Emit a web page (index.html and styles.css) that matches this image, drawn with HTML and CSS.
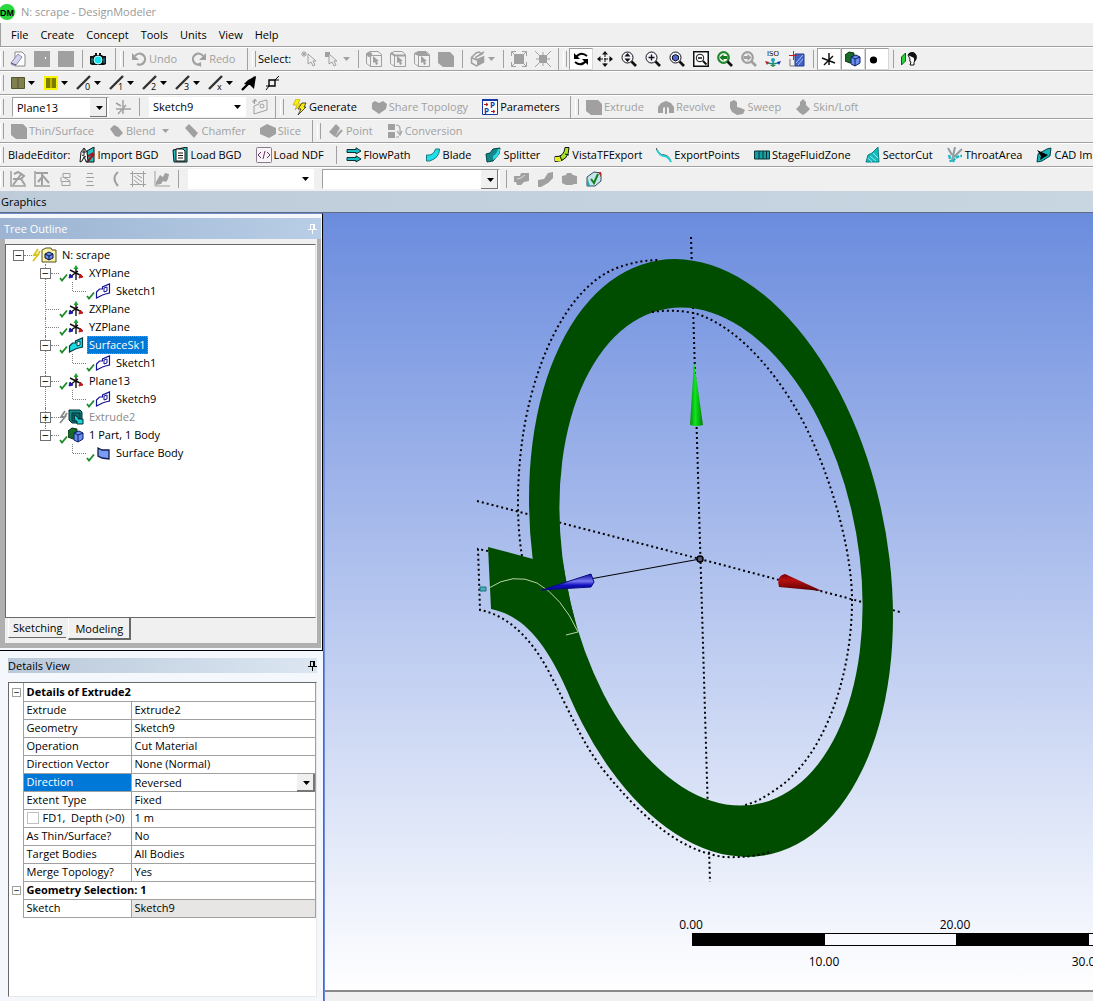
FILE: index.html
```html
<!DOCTYPE html>
<html lang="en">
<head>
<meta charset="utf-8">
<meta name="viewport" content="width=device-width, initial-scale=1">
<title>N: scrape - DesignModeler</title>
<link rel="stylesheet" href="styles.css">
</head>
<body>
<svg class="sprite" aria-hidden="true">
  <symbol id="caret" viewBox="0 0 7 4"><path d="M0 0h7L3.500 4z" fill="currentColor"/></symbol>
  <symbol id="pin" viewBox="0 0 9 10"><path d="M2.500 0v5M2 .5h5M5.500 0v5M6.500 0v5M0 5.500h9M4.500 6v4" fill="none" stroke="currentColor"/></symbol>
  <symbol id="new" viewBox="0 0 16 16"><path d="M5 1h7l3 3v11H5z" fill="#fff" stroke="#888"/><path d="M1 12l7-9 4 3-6 8H2z" fill="#d4d4f0" stroke="#8a8aa8"/><path d="M1 12l5 2" stroke="#55557a"/></symbol>
  <symbol id="save" viewBox="0 0 16 16"><path d="M0 0h16v16H0z" fill="#a0a0a0"/><path d="M11 6h1v2h-1z" fill="#fff"/></symbol>
  <symbol id="blank" viewBox="0 0 16 16"><path d="M0 0h16v16H0z" fill="#a0a0a0"/></symbol>
  <symbol id="camera" viewBox="0 0 16 16"><path d="M0 5h3l1-1h8l1 1h3v8l-2 1H2l-2-1z" fill="#111"/><path d="M5 3h2M9 3h2" stroke="#111" stroke-width="2"/><circle cx="8" cy="9" r="4" fill="#19e0ee" stroke="#bff"/><path d="M2 7v5M14 7v5" stroke="#18a8b0"/></symbol>
  <symbol id="undo" viewBox="0 0 16 16"><path d="M4 5a5.500 5.500 0 1 1 2 8" fill="none" stroke="#a0a0a0" stroke-width="2.200"/><path d="M1 2v7h7z" fill="#a0a0a0"/></symbol>
  <symbol id="redo" viewBox="0 0 16 16"><path d="M12 5a5.500 5.500 0 1 0-2 8" fill="none" stroke="#a0a0a0" stroke-width="2.200"/><path d="M15 2v7H8z" fill="#a0a0a0"/><path d="M6 13l4-2v5z" fill="#a0a0a0"/></symbol>
  <symbol id="pick" viewBox="0 0 16 16"><path d="M0 3h6M3 0v6M1 1l4 4M5 1L1 5" stroke="#a0a0a0"/><path d="M7 3v10l3-2 2 4 2-1-2-4h3z" fill="#eee" stroke="#a0a0a0"/></symbol>
  <symbol id="pickbox" viewBox="0 0 16 16"><path d="M0 1h5v5H0z" fill="#a0a0a0"/><path d="M4 3v10l3-2 2 4 2-1-2-4h3z" fill="#eee" stroke="#a0a0a0"/></symbol>
  <symbol id="cube" viewBox="0 0 16 16"><path d="M.5 2.500L4 .5h8l3.500 3v12h-11l-4-3zM.5 2.500l4 2h11M4.500 4.500v11" fill="none" stroke="#a0a0a0"/><path d="M7 5v7l2-1 1 3 2-1-1-3h2z" fill="#a0a0a0"/></symbol>
  <symbol id="cubev" viewBox="0 0 16 16"><use href="#cube"/><circle cx="3.500" cy="3.500" r="2.500" fill="#a0a0a0"/></symbol>
  <symbol id="cubee" viewBox="0 0 16 16"><use href="#cube"/><path d="M1 2l4 2.500h10" fill="none" stroke="#a0a0a0" stroke-width="2"/></symbol>
  <symbol id="cubef" viewBox="0 0 16 16"><use href="#cube"/><path d="M0 2l4-1h8l4 4H5z" fill="#a0a0a0"/></symbol>
  <symbol id="body" viewBox="0 0 16 16"><path d="M0 1h12l4 4v11H5l-5-4z" fill="#a0a0a0"/></symbol>
  <symbol id="isobox" viewBox="0 0 16 16"><path d="M1.500 6.500l5 2.500 7-3v5l-7 4-5-3z" fill="none" stroke="#a0a0a0" stroke-width="1.500"/><path d="M7 9l7-3v5l-7 4z" fill="#a0a0a0"/><path d="M2 6l4-4 3-1 3 2-6 3v2M9 4l5-3" fill="none" stroke="#a0a0a0" stroke-width="1.500"/></symbol>
  <symbol id="expand" viewBox="0 0 16 16"><path d="M3 3h10v10H3z" fill="#a0a0a0"/><path d="M.5 5V.5H5M11 .5h4.500V5M15.500 11v4.500H11M5 15.500H.5V11M1 1l3 3M15 1l-3 3M15 15l-3-3M1 15l3-3" fill="none" stroke="#a0a0a0"/></symbol>
  <symbol id="shrink" viewBox="0 0 16 16"><path d="M4 4h8v8H4z" fill="#a0a0a0"/><path d="M0 0l16 16M16 0L0 16M8 1v14M1 8h14" stroke="#a0a0a0"/></symbol>
  <symbol id="rotate" viewBox="0 0 16 16"><path d="M14 5Q8 0 3 6M2 11q6 5 11-1" fill="none" stroke="#000" stroke-width="2"/><path d="M1 2v6h6zM15 14V8H9z" fill="#000"/></symbol>
  <symbol id="pan" viewBox="0 0 16 16"><path d="M8 2v12M2 8h12" stroke="#111" stroke-dasharray="4 1"/><path d="M8 0l3 3.500H5zM8 16l3-3.500H5zM0 8l3.500-3v6zM16 8l-3.500-3v6z" fill="#111"/></symbol>
  <symbol id="lens" viewBox="0 0 16 16"><circle cx="6.500" cy="6.500" r="5.500" fill="#f4f4ff" stroke="#111"/><path d="M10.500 10.500L15 15" stroke="#111" stroke-width="2.600"/></symbol>
  <symbol id="zoom" viewBox="0 0 16 16"><use href="#lens"/><path d="M6.500 2l3 3.500h-6zM6.500 11l3-3.500h-6z" fill="#111"/></symbol>
  <symbol id="zoomin" viewBox="0 0 16 16"><use href="#lens"/><path d="M6.500 3.500v6M3.500 6.500h6" stroke="#111" stroke-width="1.400"/></symbol>
  <symbol id="zoomfit" viewBox="0 0 16 16"><use href="#lens"/><path d="M3.500 5l3-1.500L9.500 5v3.500l-3 1.500-3-1.500z" fill="#4c66d0" stroke="#112"/></symbol>
  <symbol id="zoomwin" viewBox="0 0 16 16"><path d="M.75.75h14.500v14.500H.75z" fill="#fff" stroke="#111" stroke-width="1.500"/><circle cx="7" cy="7" r="3.800" fill="none" stroke="#111"/><path d="M10 10l3.500 3.500" stroke="#111" stroke-width="2"/><path d="M5 7h4" stroke="#111" stroke-width="1.500"/></symbol>
  <symbol id="zoomprev" viewBox="0 0 16 16"><circle cx="6.500" cy="6.500" r="5.300" fill="#fff" stroke="#22882a" stroke-width="2.200"/><path d="M10.500 10.500L15 15" stroke="#111" stroke-width="2.600"/><path d="M2.500 6.500l4-3.500v2h4v3h-4v2z" fill="#127a1c"/></symbol>
  <symbol id="zoomnext" viewBox="0 0 16 16"><circle cx="6.500" cy="6.500" r="5.300" fill="none" stroke="#a0a0a0" stroke-width="2.200"/><path d="M10.500 10.500L15 15" stroke="#a0a0a0" stroke-width="2.600"/><path d="M10.500 6.500l-4-3.500v2h-4v3h4v2z" fill="#a0a0a0"/></symbol>
  <symbol id="iso" viewBox="0 0 16 16"><text x="8" y="5" text-anchor="middle" font-family="DejaVu Sans" font-size="7" fill="#111">ISO</text><path d="M8 9v5M3 12l5 1 5-1" stroke="#178a7a" fill="none" stroke-width="1.500"/><circle cx="8" cy="9" r="2" fill="#19a5c0"/><path d="M0 10l4 1-2 3z" fill="#c01818"/><path d="M16 10l-4 1 2 3z" fill="#1a2fb8"/><path d="M5 14h6l-3 2z" fill="#188a38"/></symbol>
  <symbol id="lookat" viewBox="0 0 16 16"><path d="M6 3h9v12H6z" fill="#3e62c8" stroke="#223a8a"/><path d="M7 12l7-8M9 14l5-6" stroke="#a9c0f4"/><path d="M0 4.500h8M4.500 0v9" stroke="#c02020"/><path d="M1 8v7h5" fill="none" stroke="#777"/></symbol>
  <symbol id="triad" viewBox="0 0 16 16"><path d="M8 2v12M1 7l13 5M3 14l9-9" stroke="#111" stroke-width="1.500"/></symbol>
  <symbol id="twocubes" viewBox="0 0 16 16"><path d="M0 4l4-3 5 1v8l-4 2-5-2z" fill="#176a2a" stroke="#0a3312"/><path d="M6 6l5-2 4 2v6l-5 3-4-2z" fill="#6b8df0" stroke="#0a1e66"/><path d="M6 6l4 2 5-2M10 8v7" fill="none" stroke="#0a1e66"/></symbol>
  <symbol id="dot" viewBox="0 0 16 16"><circle cx="4.500" cy="9" r="3.600" fill="#000"/></symbol>
  <symbol id="face" viewBox="0 0 16 16"><path d="M.5 6l4-4v8l-4 4z" fill="#27d43a" stroke="#0b5a16"/><path d="M7 4q1-3 5-2 4 1 3 6l-2 3v3H9l1-3q-2 0-1-3z" fill="#fff" stroke="#111"/><path d="M7 4q1-3 5-3 5 2 3 8l-2 2V7L9 5z" fill="#111"/></symbol>
  <symbol id="fc1" viewBox="0 0 16 16"><path d="M1.500 2.500h13v11h-13zM8 2v12" fill="#7f7f4f" stroke="#55552c"/></symbol>
  <symbol id="fc2" viewBox="0 0 16 16"><path d="M1 1h14v14H1z" fill="#f8f400"/><path d="M3 3h10v10H3z" fill="#7b7b00"/><path d="M8 3v10" stroke="#f8f400"/></symbol>
  <symbol id="edge" viewBox="0 0 16 16"><path d="M1 14L14 1" stroke="#333" stroke-width="2.400"/></symbol>
  <symbol id="edge0" viewBox="0 0 16 16"><use href="#edge"/><text x="9" y="15" class="digit">0</text></symbol>
  <symbol id="edge1" viewBox="0 0 16 16"><use href="#edge"/><text x="9" y="15" class="digit">1</text></symbol>
  <symbol id="edge2" viewBox="0 0 16 16"><use href="#edge"/><text x="9" y="15" class="digit">2</text></symbol>
  <symbol id="edge3" viewBox="0 0 16 16"><use href="#edge"/><text x="9" y="15" class="digit">3</text></symbol>
  <symbol id="edgex" viewBox="0 0 16 16"><use href="#edge"/><text x="9" y="15" class="digit">x</text></symbol>
  <symbol id="arrow" viewBox="0 0 16 16"><path d="M1 15L14 2" stroke="#000" stroke-width="2.400"/><path d="M15 1l-2 13-4-4-6-1 4-4z" fill="#000"/></symbol>
  <symbol id="vertex" viewBox="0 0 16 16"><path d="M4 5h6v6H4z" fill="none" stroke="#000" stroke-width="1.400"/><path d="M10 5l4-4M4 11l-3 4M10 5h4M1 11h3" stroke="#000"/></symbol>
  <symbol id="newplane" viewBox="0 0 16 16"><path d="M8 1v14M1 10h15M3 15l8-9M1 4l5 3" stroke="#a0a0a0" stroke-width="1.500"/></symbol>
  <symbol id="newsketch" viewBox="0 0 16 16"><path d="M2 7l5-2V3l8-2v10L2 15z" fill="none" stroke="#a0a0a0"/><circle cx="10" cy="7" r="2" fill="none" stroke="#a0a0a0"/><path d="M0 2h5M2.500 0v5M1 4l3-4" stroke="#a0a0a0"/></symbol>
  <symbol id="bolt" viewBox="0 0 16 16"><path d="M5 0h4L7 5h3l-6 6 2-5H2z" fill="#fdee10" stroke="#b8a800" stroke-width=".7"/><path d="M11 4h4l-2 4h2l-8 8 3-6H7z" fill="#fdee10" stroke="#222" stroke-width=".8"/></symbol>
  <symbol id="share" viewBox="0 0 16 16"><path d="M1 4l3-2 4 2 4-2 4 3-1 5-7 5-7-5z" fill="#a0a0a0"/></symbol>
  <symbol id="param" viewBox="0 0 16 16"><path d="M.5 1h15v14.500H.5z" fill="#fff" stroke="#1738a8"/><path d="M0 0h16v2H0z" fill="#1738a8"/><text x="8" y="9" class="pp">P</text><text x="2" y="15" class="pp">P</text><path d="M2 5.500h4M4 4l2 1.500L4 7M9 12.500h4M11 11l2 1.500-2 1.500" stroke="#b01818" fill="none"/></symbol>
  <symbol id="revolve" viewBox="0 0 16 16"><path d="M0 14V8l3-4 5-2 5 2 3 4v6h-5V9l-2-1v7H7V8L5 9v5z" fill="#a0a0a0"/></symbol>
  <symbol id="sweep" viewBox="0 0 16 16"><path d="M1 3l4-2 3 2v5l4 1 4 2-2 4-6 1-5-3-2-4z" fill="#a0a0a0"/></symbol>
  <symbol id="loft" viewBox="0 0 16 16"><path d="M8 0l3 3v3l4 4-4 4-3 2-3-2-4-4 4-4V3z" fill="#a0a0a0"/></symbol>
  <symbol id="blend" viewBox="0 0 16 16"><path d="M2 6l4-4 4 2 5 6-4 4-4-1z" fill="#a0a0a0"/></symbol>
  <symbol id="chamfer" viewBox="0 0 16 16"><path d="M2 5l4-4 9 9-4 5z" fill="#a0a0a0"/></symbol>
  <symbol id="slice" viewBox="0 0 16 16"><path d="M0 5l7-4 9 4v6l-7 4-9-4z" fill="#a0a0a0"/></symbol>
  <symbol id="point" viewBox="0 0 16 16"><path d="M1 9l7-8 4 4-5 9z" fill="#a0a0a0"/><path d="M8 14l6-7" stroke="#a0a0a0" stroke-width="2"/></symbol>
  <symbol id="convert" viewBox="0 0 16 16"><path d="M1 1h7v6H1zM1 9h7v6H1z" fill="#a0a0a0"/><path d="M9 2q4 0 4 4v4M10 8l3 4 2-4M9 14h3" stroke="#a0a0a0" fill="none" stroke-width="1.200"/></symbol>
  <symbol id="ibgd" viewBox="0 0 16 16"><path d="M8 4l7-4v15H7z" fill="#21c4c8" stroke="#111"/><path d="M8 10l6-4M9 14l6-7" stroke="#a01515" stroke-width="2"/><path d="M1 15l1-10 3-4 3 4 1 10-2-1-2-4-2 4z" fill="#fff" stroke="#111"/><path d="M3 5h4M3 8l4 2M5 2v6" stroke="#111"/></symbol>
  <symbol id="lbgd" viewBox="0 0 16 16"><path d="M1 3l14-3v15H2z" fill="#21c4c8" stroke="#111"/><path d="M4 2h7l2 2v10H4z" fill="#fff" stroke="#111"/><path d="M6 6h5M6 8.500h5M6 11h5" stroke="#111"/></symbol>
  <symbol id="lndf" viewBox="0 0 16 16"><rect x=".5" y=".5" width="15" height="15" rx="1" fill="#f8f4fa" stroke="#857c8c"/><path d="M5 5L2 8l3 3M11 5l3 3-3 3M9 4l-2 8" stroke="#6b2f6e" fill="none"/></symbol>
  <symbol id="flow" viewBox="0 0 16 16"><path d="M1 2.500h9V.8L15 4l-5 3V5.500H1zM1 10.500h9V8.800L15 12l-5 3v-1.500H1z" fill="#16c0c4" stroke="#0b2e30"/></symbol>
  <symbol id="blade" viewBox="0 0 16 16"><path d="M1.500 8q7 1 9-6l4 0q0 9-10 12h-3z" fill="#1fe0e8" stroke="#147a80"/></symbol>
  <symbol id="split" viewBox="0 0 16 16"><path d="M1 7l4-1 3-4 7-1-1 6-6 7-6 1z" fill="#12888c" stroke="#064447"/><path d="M8 9q4-2 5-7l2 0q0 7-7 11z" fill="#29d9e0"/></symbol>
  <symbol id="vista" viewBox="0 0 16 16"><path d="M1 9.500q9 1 10-9h4q0 14-14 14z" fill="#a5e62a" stroke="#111"/><path d="M1 10h6v4H1z" fill="#e8ee18"/><path d="M6 9l2 5M11 7l4 1" stroke="#111"/></symbol>
  <symbol id="export" viewBox="0 0 16 16"><path d="M0 1q3 7 8 7t7 7" fill="none" stroke="#333" stroke-width="1"/><path d="M1 3q3 6 7 6t7 6" fill="none" stroke="#1fd0d4" stroke-width="1.800"/></symbol>
  <symbol id="stage" viewBox="0 0 16 16"><path d="M.5 4h15v8H.5zM5 4v8M9 4v8M12.500 4v8" fill="#169fa3" stroke="#063438"/></symbol>
  <symbol id="sector" viewBox="0 0 16 16"><path d="M1 15l2-7 4-2 6-6 1 15z" fill="#18b8bc" stroke="#0f8085"/><path d="M5 9l6 5M8 6l5 5M3 11l4 4" stroke="#8af0f0"/></symbol>
  <symbol id="throat" viewBox="0 0 16 16"><path d="M1 1l4 7M8 0L5 14M15 2L7 10" stroke="#8f9ea0" stroke-width="2"/><path d="M6 15q2-6 9-6M2 8l2 7" stroke="#1fb8c4" stroke-width="2.500" fill="none" stroke-dasharray="4 1"/></symbol>
  <symbol id="cad" viewBox="0 0 16 16"><path d="M2 7l9-5 4-1-1 8-8 5-5 1z" fill="#17b5b9" stroke="#0b4144"/><path d="M1 3l11 5-8 5 1-4z" fill="#000"/></symbol>
  <symbol id="sk1" viewBox="0 0 16 16"><path d="M1 0v15h15" fill="none" stroke="#a0a0a0" stroke-width="1.500"/><path d="M3 14l9-12M4 3l4-2 6 4-3 3 4 6M3 8h8" fill="none" stroke="#a0a0a0" stroke-width="2"/></symbol>
  <symbol id="sk2" viewBox="0 0 16 16"><path d="M1 0v15h15" fill="none" stroke="#a0a0a0" stroke-width="1.500"/><path d="M2 2h12M8 1v13M4 11l5-6 6 7" fill="none" stroke="#a0a0a0" stroke-width="2"/></symbol>
  <symbol id="sk3" viewBox="0 0 16 16"><path d="M5 2.500h7v4H5zM4 10.500h8v4H4zM5 6l7 4M3 6v5" fill="none" stroke="#a0a0a0"/></symbol>
  <symbol id="sk4" viewBox="0 0 16 16"><path d="M5 2.500h6M4 6.500h8M5 10.500h6M4 14.500h8" stroke="#a0a0a0"/></symbol>
  <symbol id="sk5" viewBox="0 0 16 16"><path d="M12 1q-7 6 0 14" fill="none" stroke="#a0a0a0" stroke-width="2"/></symbol>
  <symbol id="sk6" viewBox="0 0 16 16"><path d="M2.500 2.500h11v11h-11zM0 2.500h16M0 13.500h16M2.500 0v16M13.500 0v16M4 5l8 6M7 4l5 3M4 9l5 4" fill="none" stroke="#a0a0a0"/></symbol>
  <symbol id="sk7" viewBox="0 0 16 16"><path d="M1 0v15h15" fill="none" stroke="#a0a0a0"/><path d="M2 11l4-7 3 2 2-4 4 1-1 5-2 3-3-1-2 3-5 1z" fill="#a0a0a0"/></symbol>
  <symbol id="c1" viewBox="0 0 16 16"><path d="M0 5l6 0 1-3h8v8l-5 1-3 3H3l-1-3H0z" fill="#a0a0a0"/><path d="M3 8l4-1 4-3" stroke="#ddd" fill="none"/></symbol>
  <symbol id="c2" viewBox="0 0 16 16"><path d="M0 9l6-1 4-6 5-1v6l-5 5-7 4H0z" fill="#a0a0a0"/></symbol>
  <symbol id="c3" viewBox="0 0 16 16"><path d="M0 5l4-1 1-2h4l2 2 4 1v8h-3l-2 1H4l-4-2z" fill="#a0a0a0"/></symbol>
  <symbol id="c4" viewBox="0 0 16 16"><path d="M1 6l7-5 7 1v8l-6 5-8 0z" fill="#c6e4ec" stroke="#33505e"/><path d="M1 6v9l3 0z" fill="#1ba5ac"/><path d="M12 1h3v5z" fill="#b03030"/><path d="M5 8l3 4 4-9" stroke="#128020" stroke-width="2" fill="none"/></symbol>
  <symbol id="check" viewBox="0 0 9 9"><path d="M1 5l2 2.500L8 1.500" fill="none" stroke="#1c8a28" stroke-width="1.800"/></symbol>
  <symbol id="zap" viewBox="0 0 9 14"><path d="M6 1L2 7h4L1 13M8 3L5 8" fill="none" stroke="currentColor" stroke-width="1.800"/></symbol>
  <symbol id="t-proj" viewBox="0 0 16 16"><path d="M1 3l4-2h5l1 2h4v12H1z" fill="#fbf4a8" stroke="#55501c"/><path d="M4 7l4-2 4 2v4l-4 2-4-2z" fill="#6b8df0" stroke="#0a1440"/><path d="M4 7l4 2 4-2M8 9v4" fill="none" stroke="#0a1440"/></symbol>
  <symbol id="t-plane" viewBox="0 0 16 16"><path d="M8 3v12M2 5l12 6M2 12l8-6" stroke="#111" stroke-width="1.400"/><path d="M8 0l2.500 4h-5z" fill="#18a828"/><path d="M15 12l-4 1 1-4z" fill="#c01818" stroke="#c01818"/><path d="M1 13l1-4 3 3z" fill="#1a1ab0" stroke="#1a1ab0"/></symbol>
  <symbol id="t-sketch" viewBox="0 0 16 16"><path d="M1.500 9l3-3h3V4l7-3v9l-4 1-3 1-6 3z" fill="#fff" stroke="#14149a" stroke-width="1.200"/><path d="M9 5l3-1v4l-3 1z" fill="none" stroke="#14149a"/></symbol>
  <symbol id="t-surf" viewBox="0 0 16 16"><path d="M1.500 9l3-3h3V4l7-3v9l-4 1-3 1-6 3z" fill="#19dce4" stroke="#063c40" stroke-width="1.200"/><path d="M9 5l3-1v4l-3 1z" fill="#fff" stroke="#063c40"/></symbol>
  <symbol id="t-extr" viewBox="0 0 16 16"><path d="M1 1h11l2 2v11H4l-3-3z" fill="#138a8c" stroke="#032c2e"/><path d="M4 4h8v8H4z" fill="#0a6a6c" stroke="#032c2e"/><path d="M6 6l4 2v2h5v5H9v-3H7z" fill="#19d4d8" stroke="#032c2e"/></symbol>
  <symbol id="t-body" viewBox="0 0 16 16"><path d="M3 3l4 2 7-0v9l-7-1-4-2z" fill="#7c9cf4" stroke="#101a50" stroke-width="1.300"/></symbol>
</svg>

<header class="titlebar">
  <svg class="logo" viewBox="0 0 16 16" aria-hidden="true"><circle cx="7" cy="8" r="8" fill="#28d83c"/><text x="7" y="12" text-anchor="middle" class="dm">DM</text></svg>
  <span>N: scrape - DesignModeler</span>
</header>

<nav class="menubar" aria-label="Main menu">
  <button>File</button><button>Create</button><button>Concept</button><button>Tools</button><button>Units</button><button>View</button><button>Help</button>
</nav>

<div class="toolbar" role="toolbar" aria-label="Standard">
  <div class="band band-file">
    <button class="ic" aria-label="New"><svg><use href="#new"/></svg></button>
    <button class="ic" aria-label="Save" disabled><svg><use href="#save"/></svg></button>
    <button class="ic" aria-label="Export" disabled><svg><use href="#blank"/></svg></button>
    <i class="sep"></i>
    <button class="ic" aria-label="Image capture"><svg><use href="#camera"/></svg></button>
  </div>
  <div class="band band-history">
    <button class="tool" disabled><svg><use href="#undo"/></svg>Undo</button>
    <button class="tool" disabled><svg><use href="#redo"/></svg>Redo</button>
  </div>
  <div class="band band-select">
    <span class="caption">Select:</span>
    <button class="ic" aria-label="New selection" disabled><svg><use href="#pick"/></svg></button>
    <button class="drop" aria-label="Select mode" disabled><svg><use href="#pickbox"/></svg><svg class="caret"><use href="#caret"/></svg></button>
    <i class="sep"></i>
    <button class="ic" aria-label="Points" disabled><svg><use href="#cubev"/></svg></button>
    <button class="ic" aria-label="Edges" disabled><svg><use href="#cubee"/></svg></button>
    <button class="ic" aria-label="Faces" disabled><svg><use href="#cubef"/></svg></button>
    <button class="ic" aria-label="Bodies" disabled><svg><use href="#body"/></svg></button>
    <i class="sep"></i>
    <button class="drop" aria-label="Extend" disabled><svg><use href="#isobox"/></svg><svg class="caret"><use href="#caret"/></svg></button>
    <i class="sep"></i>
    <button class="ic" aria-label="Grow" disabled><svg><use href="#expand"/></svg></button>
    <button class="ic" aria-label="Shrink" disabled><svg><use href="#shrink"/></svg></button>
  </div>
  <div class="band band-last">
    <button class="ic on" aria-label="Rotate"><svg><use href="#rotate"/></svg></button>
    <button class="ic" aria-label="Pan"><svg><use href="#pan"/></svg></button>
    <button class="ic" aria-label="Zoom"><svg><use href="#zoom"/></svg></button>
    <button class="ic" aria-label="Box zoom"><svg><use href="#zoomin"/></svg></button>
    <button class="ic" aria-label="Zoom to fit"><svg><use href="#zoomfit"/></svg></button>
    <button class="ic" aria-label="Magnifier"><svg><use href="#zoomwin"/></svg></button>
    <button class="ic" aria-label="Previous view"><svg><use href="#zoomprev"/></svg></button>
    <button class="ic" aria-label="Next view" disabled><svg><use href="#zoomnext"/></svg></button>
    <button class="ic" aria-label="Isometric view"><svg><use href="#iso"/></svg></button>
    <button class="ic" aria-label="Look at plane"><svg><use href="#lookat"/></svg></button>
    <i class="sep"></i>
    <button class="ic on" aria-label="Display plane"><svg><use href="#triad"/></svg></button>
    <button class="ic on" aria-label="Display model"><svg><use href="#twocubes"/></svg></button>
    <button class="ic on" aria-label="Display points"><svg><use href="#dot"/></svg></button>
    <i class="sep"></i>
    <button class="ic" aria-label="Look at face"><svg><use href="#face"/></svg></button>
  </div>
</div>

<div class="toolbar" role="toolbar" aria-label="Display">
  <div class="band band-last">
    <button class="drop" aria-label="Face color"><svg><use href="#fc1"/></svg><svg class="caret"><use href="#caret"/></svg></button>
    <button class="drop" aria-label="Highlight color"><svg><use href="#fc2"/></svg><svg class="caret"><use href="#caret"/></svg></button>
    <button class="drop" aria-label="Edges, free"><svg><use href="#edge0"/></svg><svg class="caret"><use href="#caret"/></svg></button>
    <button class="drop" aria-label="Edges, single"><svg><use href="#edge1"/></svg><svg class="caret"><use href="#caret"/></svg></button>
    <button class="drop" aria-label="Edges, double"><svg><use href="#edge2"/></svg><svg class="caret"><use href="#caret"/></svg></button>
    <button class="drop" aria-label="Edges, triple"><svg><use href="#edge3"/></svg><svg class="caret"><use href="#caret"/></svg></button>
    <button class="drop" aria-label="Edges, multiple"><svg><use href="#edgex"/></svg><svg class="caret"><use href="#caret"/></svg></button>
    <button class="ic" aria-label="Edge direction"><svg><use href="#arrow"/></svg></button>
    <button class="ic" aria-label="Display vertices"><svg><use href="#vertex"/></svg></button>
  </div>
</div>

<div class="toolbar" role="toolbar" aria-label="Modeling">
  <div class="band band-plane">
    <span class="combo framed combo-s"><select aria-label="Active plane"><option>Plane13</option></select><svg class="caret"><use href="#caret"/></svg></span>
    <button class="ic" aria-label="New plane" disabled><svg><use href="#newplane"/></svg></button>
    <i class="sep"></i>
    <span class="combo combo-s"><select aria-label="Active sketch"><option>Sketch9</option></select><svg class="caret"><use href="#caret"/></svg></span>
    <button class="ic" aria-label="New sketch" disabled><svg><use href="#newsketch"/></svg></button>
  </div>
  <div class="band band-generate">
    <button class="tool"><svg><use href="#bolt"/></svg>Generate</button>
    <button class="tool" disabled><svg><use href="#share"/></svg>Share Topology</button>
    <button class="tool"><svg><use href="#param"/></svg>Parameters</button>
  </div>
  <div class="band band-last">
    <button class="tool" disabled><svg><use href="#body"/></svg>Extrude</button>
    <button class="tool" disabled><svg><use href="#revolve"/></svg>Revolve</button>
    <button class="tool" disabled><svg><use href="#sweep"/></svg>Sweep</button>
    <button class="tool" disabled><svg><use href="#loft"/></svg>Skin/Loft</button>
  </div>
</div>

<div class="toolbar" role="toolbar" aria-label="Features">
  <div class="band band-feature">
    <button class="tool" disabled><svg><use href="#body"/></svg>Thin/Surface</button>
    <button class="tool" disabled><svg><use href="#blend"/></svg>Blend<svg class="caret"><use href="#caret"/></svg></button>
    <button class="tool" disabled><svg><use href="#chamfer"/></svg>Chamfer</button>
    <button class="tool" disabled><svg><use href="#slice"/></svg>Slice</button>
  </div>
  <div class="band band-last">
    <button class="tool" disabled><svg><use href="#point"/></svg>Point</button>
    <button class="tool" disabled><svg><use href="#convert"/></svg>Conversion</button>
  </div>
</div>

<div class="toolbar" role="toolbar" aria-label="BladeEditor">
  <div class="band band-last">
    <span class="caption caption-first">BladeEditor:</span>
    <button class="tool"><svg><use href="#ibgd"/></svg>Import BGD</button>
    <button class="tool"><svg><use href="#lbgd"/></svg>Load BGD</button>
    <button class="tool"><svg><use href="#lndf"/></svg>Load NDF</button>
    <i class="sep"></i>
    <button class="tool"><svg><use href="#flow"/></svg>FlowPath</button>
    <button class="tool"><svg><use href="#blade"/></svg>Blade</button>
    <button class="tool"><svg><use href="#split"/></svg>Splitter</button>
    <button class="tool"><svg><use href="#vista"/></svg>VistaTFExport</button>
    <button class="tool"><svg><use href="#export"/></svg>ExportPoints</button>
    <button class="tool"><svg><use href="#stage"/></svg>StageFluidZone</button>
    <button class="tool"><svg><use href="#sector"/></svg>SectorCut</button>
    <button class="tool"><svg><use href="#throat"/></svg>ThroatArea</button>
    <button class="tool"><svg><use href="#cad"/></svg>CAD Import</button>
  </div>
</div>

<div class="toolbar toolbar-end" role="toolbar" aria-label="Sketch tools">
  <div class="band band-last">
    <button class="ic" aria-label="Sketch instance" disabled><svg><use href="#sk1"/></svg></button>
    <button class="ic" aria-label="Projection" disabled><svg><use href="#sk2"/></svg></button>
    <button class="ic" aria-label="Link" disabled><svg><use href="#sk3"/></svg></button>
    <button class="ic" aria-label="Layers" disabled><svg><use href="#sk4"/></svg></button>
    <button class="ic" aria-label="Curve" disabled><svg><use href="#sk5"/></svg></button>
    <button class="ic" aria-label="Section" disabled><svg><use href="#sk6"/></svg></button>
    <button class="ic" aria-label="Transform" disabled><svg><use href="#sk7"/></svg></button>
    <i class="sep"></i>
    <span class="combo combo-m"><select aria-label="Flow path"><option></option></select><svg class="caret"><use href="#caret"/></svg></span>
    <span class="combo framed combo-l"><select aria-label="Blade row"><option></option></select><svg class="caret"><use href="#caret"/></svg></span>
    <i class="sep"></i>
    <button class="ic" aria-label="Blade row view" disabled><svg><use href="#c1"/></svg></button>
    <button class="ic" aria-label="Blade view" disabled><svg><use href="#c2"/></svg></button>
    <button class="ic" aria-label="Hub view" disabled><svg><use href="#c3"/></svg></button>
    <button class="ic" aria-label="Preferences"><svg><use href="#c4"/></svg></button>
  </div>
</div>

<h1 class="graphics-title">Graphics</h1>

<main class="workspace">
  <aside class="side">
    <section class="outline">
      <header class="outline-head"><h2>Tree Outline</h2><button class="pin" aria-label="Pin tree outline"><svg><use href="#pin"/></svg></button></header>
      <div class="outline-body">
        <ul class="tree">
          <li>
            <div class="node"><button class="toggle" aria-label="Collapse">−</button><i class="dots"></i><svg class="state zap-yellow"><use href="#zap"/></svg><svg class="icon"><use href="#t-proj"/></svg><span>N: scrape</span></div>
            <ul>
              <li><div class="node"><button class="toggle" aria-label="Collapse">−</button><i class="dots"></i><svg class="state"><use href="#check"/></svg><svg class="icon"><use href="#t-plane"/></svg><span>XYPlane</span></div>
                <ul><li><div class="node"><i class="dots long"></i><svg class="state"><use href="#check"/></svg><svg class="icon"><use href="#t-sketch"/></svg><span>Sketch1</span></div></li></ul></li>
              <li><div class="node"><i class="dots long"></i><svg class="state"><use href="#check"/></svg><svg class="icon"><use href="#t-plane"/></svg><span>ZXPlane</span></div></li>
              <li><div class="node"><i class="dots long"></i><svg class="state"><use href="#check"/></svg><svg class="icon"><use href="#t-plane"/></svg><span>YZPlane</span></div></li>
              <li><div class="node"><button class="toggle" aria-label="Collapse">−</button><i class="dots"></i><svg class="state"><use href="#check"/></svg><svg class="icon"><use href="#t-surf"/></svg><span class="selected">SurfaceSk1</span></div>
                <ul><li><div class="node"><i class="dots long"></i><svg class="state"><use href="#check"/></svg><svg class="icon"><use href="#t-sketch"/></svg><span>Sketch1</span></div></li></ul></li>
              <li><div class="node"><button class="toggle" aria-label="Collapse">−</button><i class="dots"></i><svg class="state"><use href="#check"/></svg><svg class="icon"><use href="#t-plane"/></svg><span>Plane13</span></div>
                <ul><li><div class="node"><i class="dots long"></i><svg class="state"><use href="#check"/></svg><svg class="icon"><use href="#t-sketch"/></svg><span>Sketch9</span></div></li></ul></li>
              <li><div class="node"><button class="toggle" aria-label="Expand">+</button><i class="dots"></i><svg class="state zap-gray"><use href="#zap"/></svg><svg class="icon"><use href="#t-extr"/></svg><span class="muted">Extrude2</span></div></li>
              <li><div class="node"><button class="toggle" aria-label="Collapse">−</button><i class="dots"></i><svg class="state"><use href="#check"/></svg><svg class="icon"><use href="#twocubes"/></svg><span>1 Part, 1 Body</span></div>
                <ul><li><div class="node"><i class="dots long"></i><svg class="state"><use href="#check"/></svg><svg class="icon"><use href="#t-body"/></svg><span>Surface Body</span></div></li></ul></li>
            </ul>
          </li>
        </ul>
        <div class="tabs"><button class="tab">Sketching</button><button class="tab active">Modeling</button></div>
      </div>
    </section>

    <section class="details">
      <header class="details-head"><h2>Details View</h2><button class="pin" aria-label="Pin details view"><svg><use href="#pin"/></svg></button></header>
      <div class="details-body">
        <table>
          <colgroup><col class="c-gutter"><col class="c-name"><col></colgroup>
          <tr><td class="gutter"><button class="toggle small" aria-label="Collapse">−</button></td><th colspan="2">Details of Extrude2</th></tr>
          <tr><td class="gutter"></td><td>Extrude</td><td>Extrude2</td></tr>
          <tr><td class="gutter"></td><td>Geometry</td><td>Sketch9</td></tr>
          <tr><td class="gutter"></td><td>Operation</td><td>Cut Material</td></tr>
          <tr><td class="gutter"></td><td>Direction Vector</td><td>None (Normal)</td></tr>
          <tr><td class="gutter"></td><td class="current"><label for="direction">Direction</label></td><td class="editor"><span class="combo in-cell"><select id="direction"><option>Reversed</option></select><svg class="caret"><use href="#caret"/></svg></span></td></tr>
          <tr><td class="gutter"></td><td>Extent Type</td><td>Fixed</td></tr>
          <tr><td class="gutter"></td><td><label class="check"><input type="checkbox">FD1,&nbsp; Depth (&gt;0)</label></td><td>1 m</td></tr>
          <tr><td class="gutter"></td><td>As Thin/Surface?</td><td>No</td></tr>
          <tr><td class="gutter"></td><td>Target Bodies</td><td>All Bodies</td></tr>
          <tr><td class="gutter"></td><td>Merge Topology?</td><td>Yes</td></tr>
          <tr><td class="gutter"><button class="toggle small" aria-label="Collapse">−</button></td><th colspan="2">Geometry Selection: 1</th></tr>
          <tr><td class="gutter"></td><td>Sketch</td><td class="readonly">Sketch9</td></tr>
        </table>
      </div>
    </section>
  </aside>

  <section class="view">
    <svg class="scene" viewBox="325 213 768 777" preserveAspectRatio="xMidYMid meet" role="img" aria-label="Model view">
      <defs>
        <linearGradient id="g-green"><stop offset="0" stop-color="#0a8a14"/><stop offset=".4" stop-color="#0ce81c"/><stop offset="1" stop-color="#067a0c"/></linearGradient>
        <linearGradient id="g-red" x1="0" y1="0" x2="0" y2="1"><stop offset="0" stop-color="#7a0000"/><stop offset=".35" stop-color="#b81010"/><stop offset="1" stop-color="#5a0000"/></linearGradient>
        <linearGradient id="g-blue" x1="0" y1="0" x2="0" y2="1"><stop offset="0" stop-color="#0a0aa0"/><stop offset=".45" stop-color="#7878f0"/><stop offset=".7" stop-color="#1010c0"/><stop offset="1" stop-color="#0a0a90"/></linearGradient>
      </defs>
      <g class="dotted">
        <path d="M691 237L710 882"/>
        <path d="M477 501L700 559L900 612"/>
      </g>
      <path d="M700 559L590 579" stroke="#000" fill="none"/>
      <g fill="#004d00">
        <path fill-rule="evenodd" transform="matrix(1.820 .59 0 2.930 711 558)" d="M-100 0a100 100 0 1 0 200 0a100 100 0 1 0-200 0zM-83.300-.5a83.300 83.300 0 1 0 166.600 0a83.300 83.300 0 1 0-166.600 0z"/>
        <path d="M488 547L533 559L563 564L570 600L578 634L590 680L567 690C545 642 524 616 491 609z"/>
      </g>
      <g class="dotted">
        <path d="M488 551L478 549L480 610C512 616 535 645 549 672C570 712 583 745 605 772C640 815 680 852 725 857Q750 858 770 852"/>
        <path d="M522 556C516 520 517 475 523 435C532 375 560 295 612 270Q635 260 660 260"/>
        <path d="M652 312Q672 309 694 313C740 326 786 382 812 440C838 498 852 560 852 600C852 680 822 762 772 792Q758 802 745 805"/>
      </g>
      <g fill="none" stroke="#b9d2a8"><path d="M489 588Q513 572 537 583Q562 597 578 632L566 635"/></g>
      <path d="M542 590L591 574L594 582L591 587z" fill="url(#g-blue)" stroke="#0a0a80"/>
      <path d="M694 362L690 425Q697 427 703 425z" fill="url(#g-green)"/>
      <path d="M822 591L785 574Q776 576 779 587z" fill="url(#g-red)"/>
      <circle cx="700" cy="559" r="3" fill="#557" stroke="#000" stroke-width="1.500"/>
      <path d="M480 587h6v4h-6z" fill="#5ab" stroke="#177"/>
      <path d="M692 933h401v13H692z" fill="#f8faff"/>
      <path d="M692 933h133v13H692zM956 933h133v13H956z"/>
      <path d="M692 933.500h401M692 945.500h401" stroke="#000"/>
      <g class="scale-text"><text x="691" y="929">0.00</text><text x="955" y="929">20.00</text><text x="824" y="966">10.00</text><text x="1087" y="966">30.00</text></g>
    </svg>
    <footer class="status"></footer>
  </section>
</main>
</body>
</html>
```

FILE: styles.css
```css
* { box-sizing: border-box; }

body {
  margin: 0;
  min-height: 100vh;
  display: flex;
  flex-direction: column;
  overflow-x: hidden;
  background: #f0f0f0;
  color: #000;
  font-family: "Open Sans", "Noto Sans", sans-serif;
  font-size: 11px;
  line-height: 16px;
}

.sprite { display: none; }
.digit { font: 9px "Open Sans", sans-serif; fill: #000; }
.pp { font: bold 8px "Open Sans", sans-serif; fill: #1738a8; }
.dm { font: bold 9px "Liberation Sans", sans-serif; fill: #000; }

h1, h2 { margin: 0; font-size: 11px; font-weight: 400; }
ul { margin: 0; padding: 0; list-style: none; }

button, select, input {
  margin: 0;
  padding: 0;
  border: 0;
  background: none;
  color: inherit;
  font: inherit;
}

/* Title and menu */
.titlebar {
  height: 23px;
  display: flex;
  align-items: center;
  gap: 5px;
  background: #fff;
  color: #999;
}
.logo { width: 16px; height: 16px; }

.menubar {
  height: 24px;
  display: flex;
  align-items: center;
  padding-left: 4px;
  border-left: 1px solid #a0a0a0;
  border-bottom: 1px solid #a0a0a0;
}
.menubar button { padding: 0 6px; }

/* Toolbars */
.toolbar {
  height: 24px;
  display: flex;
  border-top: 1px solid #fff;
  border-bottom: 1px solid #a0a0a0;
  white-space: nowrap;
}
.toolbar-end { border-bottom-color: #f0f0f0; }

.band {
  flex: none;
  display: flex;
  align-items: center;
  overflow: hidden;
  border-right: 1px solid #a0a0a0;
}
.band::before {
  content: "";
  flex: none;
  width: 2px;
  height: 16px;
  margin: 0 2px 0 4px;
  border-left: 1px solid #fff;
  border-right: 1px solid #a0a0a0;
}
.band:first-child::before { margin-left: 0; }
.band-last { flex: 1; border-right: 0; }
.band-file { width: 116px; }
.band-history { width: 132px; }
.band-select { width: 311px; }
.band-plane { width: 276px; }
.band-generate { width: 295px; }
.band-feature { width: 313px; }

.band button, .band .caption, .sep, .combo { flex: none; }
.band svg { width: 16px; height: 16px; flex: none; }
.band svg.caret, .combo svg.caret { width: 7px; height: 4px; }
.caption { padding-right: 6px; }
.caption-first { padding: 0 4px 0 2px; }

.sep { width: 8px; height: 18px; display: flex; justify-content: center; }
.sep::before { content: ""; width: 1px; background: #a0a0a0; }

.ic {
  width: 24px;
  height: 22px;
  display: flex;
  align-items: center;
  justify-content: center;
}
.ic.on { background: #fff; border: 1px solid #d8d8d8; border-top-color: #a0a0a0; border-left-color: #a0a0a0; }

.drop { width: 33px; display: flex; align-items: center; gap: 2px; padding-left: 4px; }

.tool { display: flex; align-items: center; gap: 2px; padding: 0 9px 0 5px; }
.tool .caret { margin-left: 5px; }
button:disabled { color: #a0a0a0; }

.combo { display: grid; grid-template-columns: 1fr 18px; align-items: center; height: 20px; margin: 0 2px 0 6px; background: #fff; }
.combo select { grid-area: 1 / 1 / 2 / 3; width: 100%; height: 18px; padding: 0 20px 0 4px; appearance: none; outline: 0; }
.combo svg.caret { grid-area: 1 / 2; justify-self: center; pointer-events: none; }
.combo.framed { border: 1px solid #a0a0a0; border-right-color: #fff; border-bottom-color: #fff; }
.framed::after { content: ""; grid-area: 1 / 2; width: 16px; height: 18px; background: #f0f0f0; border-right: 1px solid #777; border-bottom: 1px solid #777; }
.framed select, .framed svg.caret { z-index: 1; }
.combo-s { width: 97px; }
.combo-m { width: 126px; }
.combo-l { width: 178px; }

/* Graphics caption */
.graphics-title {
  height: 22px;
  padding-left: 1px;
  line-height: 22px;
  background: linear-gradient(90deg, #becbd9, #c8d6e2);
  border-bottom: 1px solid #5e6c84;
}

.workspace { flex: 1; display: grid; grid-template-columns: 325px 1fr; }
.side { display: flex; flex-direction: column; background: #6b8cde; }

/* Tree outline */
.outline {
  height: 438px;
  margin-right: 2px;
  padding: 4px 1px 2px 0;
  display: flex;
  flex-direction: column;
  background: #f4f7fc;
  border-top: 1px solid #7088c8;
  border-right: 1px solid #000;
  border-bottom: 1px solid #000;
}
.outline-head {
  height: 21px;
  display: flex;
  align-items: center;
  justify-content: space-between;
  padding: 0 4px;
  background: linear-gradient(90deg, #9cb3d2, #b8cee6);
  color: #fff;
}
.pin { width: 9px; height: 10px; display: flex; }
.pin svg { width: 9px; height: 10px; }

.outline-body {
  flex: 1;
  display: flex;
  flex-direction: column;
  padding: 5px 1px 0 0;
  background: #f0f0f0;
  border: solid #b0b0b0;
  border-width: 0 4px 5px 5px;
}
.tree {
  flex: 1;
  padding: 1px 0 0 7px;
  background: #fff;
  border: 1px solid #696969;
  border-right-color: #e0e0e0;
}
.tree ul { padding-left: 27px; }
.tree ul > li { position: relative; }
.tree ul > li::before {
  content: "";
  position: absolute;
  left: 5px;
  top: 0;
  height: 100%;
  border-left: 1px dotted #808080;
}
.tree ul > li:last-child::before { height: 9px; }
.node { height: 18px; display: flex; align-items: center; }
.toggle {
  position: relative;
  width: 11px;
  height: 11px;
  display: flex;
  align-items: center;
  justify-content: center;
  background: #fff;
  border: 1px solid #707070;
  font-size: 12px;
  line-height: 9px;
}
.dots { width: 8px; border-top: 1px dotted #808080; }
.dots.long { width: 13px; margin-left: 6px; }
.state { width: 9px; height: 9px; align-self: flex-end; }
.state.zap-yellow, .state.zap-gray { height: 14px; align-self: center; }
.zap-yellow { color: #d8c41c; }
.zap-gray { color: #8a8a8a; }
.icon { width: 16px; height: 16px; margin-right: 3px; }
.node span { padding: 0 1px; line-height: 16px; border: 1px solid transparent; white-space: nowrap; }
.node .selected { background: #0078d7; color: #fff; border: 1px dotted #e08020; }
.node .muted { color: #8a8a8a; }

.tabs { display: flex; align-items: flex-start; height: 25px; }
.tab { height: 20px; padding: 0 4px; margin-left: 3px; border: 1px solid #696969; border-width: 0 0 1px 1px; border-left-color: #fff; }
.tab.active { height: 22px; margin-left: 2px; padding: 2px 6px 0; border-right: 2px solid #696969; border-bottom-width: 2px; }

/* Details */
.details {
  flex: 1;
  margin-right: 1px;
  padding: 7px 6px 4px 8px;
  display: flex;
  flex-direction: column;
  gap: 9px;
  background: #f4f7fc;
  border-right: 1px solid #696969;
}
.details-head {
  height: 15px;
  display: flex;
  align-items: center;
  justify-content: space-between;
  background: linear-gradient(90deg, #bac9da, #dbe6f1);
}
.details-body {
  flex: 1;
  background: #fff;
  border: 1px solid #696969;
  border-right-color: #e8e8e8;
  border-bottom-color: #e8e8e8;
}
table { width: 100%; table-layout: fixed; border-collapse: collapse; }
.c-gutter { width: 14px; }
.c-name { width: 108px; }
tr { height: 18px; }
td, th {
  height: 18px;
  padding: 0 3px;
  border: 1px solid #a0a0a0;
  border-top: 0;
  text-align: left;
  line-height: 16px;
  white-space: nowrap;
}
td.gutter { padding: 0 3px; border-left: 0; border-bottom: 0; }
.toggle.small { width: 9px; height: 9px; line-height: 7px; font-size: 10px; border-color: #a0a0a0; }
.current { background: #0078d7; color: #fff; }
.readonly { background: #e8e6e4; }
td.editor { padding: 0; }
.in-cell { height: 17px; margin: 0; }
.in-cell select { padding-left: 3px; height: 17px; z-index: 1; }
.in-cell svg.caret { z-index: 2; }
.in-cell::after { content: ""; grid-area: 1 / 2; height: 16px; width: 16px; background: #f0f0f0; border-right: 2px solid #777; border-bottom: 2px solid #777; }
.check { display: flex; align-items: center; gap: 4px; }
.check input { appearance: none; flex: none; width: 12px; height: 12px; background: #fff; border: 1px solid #c0c0c0; }

/* Model view */
.view { display: flex; flex-direction: column; min-width: 0; }
.scene {
  flex: 1;
  width: 100%;
  min-height: 0;
  background: linear-gradient(#6b8cde, #ffffff);
}
.dotted path { fill: none; stroke: #000; stroke-width: 2; stroke-dasharray: 2 3; }
.scale-text { font-size: 12px; text-anchor: middle; }
.status { flex: none; height: 11px; background: #f0f0f0; border-top: 2px solid #8a8a8a; }
```
